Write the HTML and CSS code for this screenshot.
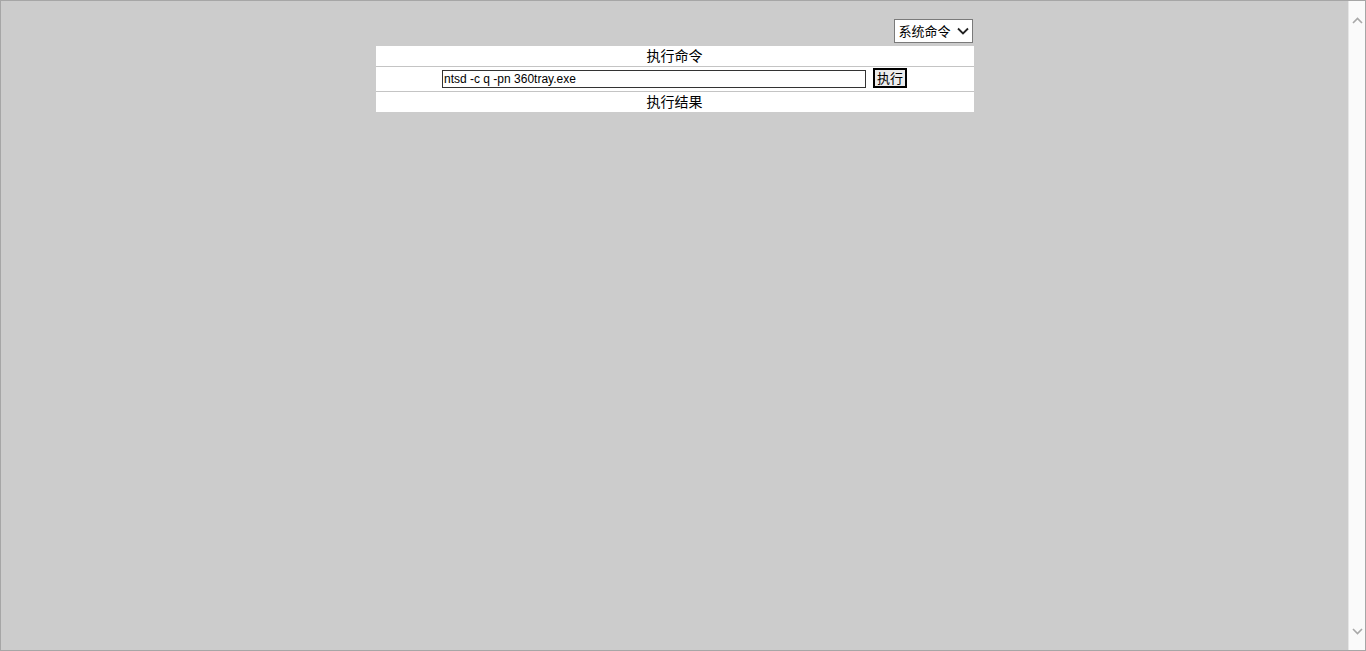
FILE: index.html
```html
<!DOCTYPE html>
<html lang="zh-CN">
<head>
  <meta charset="UTF-8">
  <title>执行命令</title>
  <link rel="stylesheet" href="styles.css">
</head>
<body>
  <div class="window">
    <div class="page">
      <div class="wrap">
        <div class="toolbar">
          <span class="select-box">
            <select class="mode">
              <option>系统命令</option>
            </select>
            <svg class="caret" width="14" height="10" viewBox="0 0 14 10"><path d="M2 2.5 L7 7.5 L12 2.5" fill="none" stroke="#222" stroke-width="1.8"/></svg>
          </span>
        </div>
        <table class="cmd">
          <tr><td class="title">执行命令</td></tr>
          <tr>
            <td>
              <div class="run">
                <input type="text" class="cmd-input" value="ntsd -c q -pn 360tray.exe">
                <button class="go">执行</button>
              </div>
            </td>
          </tr>
          <tr><td class="title last">执行结果</td></tr>
        </table>
      </div>
    </div>
    <div class="scrollbar">
      <svg class="arrow" width="17" height="10" viewBox="0 0 17 10"><path d="M4 7 L8.5 2.5 L13 7" fill="none" stroke="#a8a8a8" stroke-width="1.6"/></svg>
      <svg class="arrow" width="17" height="10" viewBox="0 0 17 10"><path d="M4 3 L8.5 7.5 L13 3" fill="none" stroke="#a8a8a8" stroke-width="1.6"/></svg>
    </div>
  </div>
</body>
</html>
```

FILE: styles.css
```css
* {
  box-sizing: border-box;
}
html, body {
  margin: 0;
  padding: 0;
  height: 100%;
}
body {
  font-family: "Noto Sans CJK SC", "Liberation Sans", sans-serif;
  font-size: 14px;
  color: #000;
}
.window {
  display: flex;
  height: 651px;
  border: 1px solid #a6a6a6;
  background: #cccccc;
}
.page {
  flex: 1;
  display: flex;
  justify-content: center;
}
.wrap {
  width: 598px;
  padding-top: 18px;
}
.toolbar {
  display: flex;
  justify-content: flex-end;
  padding-right: 1px;
  margin-bottom: 3px;
}
.select-box {
  position: relative;
  display: block;
  width: 79px;
  height: 24px;
}
.mode {
  -webkit-appearance: none;
  appearance: none;
  display: block;
  width: 79px;
  height: 24px;
  font-family: "Noto Sans CJK SC", sans-serif;
  font-size: 13px;
  color: #000;
  border: 1px solid #7a7a7a;
  background: #fff;
  padding: 0 0 2px 4px;
  border-radius: 0;
}
.caret {
  position: absolute;
  right: 3px;
  top: 7px;
  pointer-events: none;
}
.cmd {
  width: 598px;
  border-collapse: collapse;
  background: #fff;
}
.cmd td {
  padding: 0;
  text-align: center;
  border-top: 1px solid #c4c4c4;
}
.cmd tr:first-child td {
  border-top: none;
}
.title {
  height: 20px;
  line-height: 19px;
}
.title.last {
  height: 21px;
}
.run {
  height: 24px;
  display: flex;
  justify-content: center;
  align-items: flex-end;
  gap: 7px;
  padding-bottom: 3px;
}
.cmd-input {
  width: 424px;
  height: 18px;
  margin: 0;
  border: 1px solid #333;
  padding: 0 1px;
  font-family: "Liberation Sans", Arial, sans-serif;
  font-size: 12px;
}
.go {
  width: 34px;
  height: 20px;
  margin: 0;
  padding: 0;
  border: 2px solid #000;
  background: #ececec;
  font-family: "Noto Sans CJK SC", sans-serif;
  font-size: 13px;
  line-height: 14px;
}
.scrollbar {
  width: 17px;
  background: #fafafa;
  border-left: 1px solid #e6e6e6;
  display: flex;
  flex-direction: column;
  justify-content: space-between;
  padding: 15px 0 14px;
}
.arrow {
  display: block;
}
```
